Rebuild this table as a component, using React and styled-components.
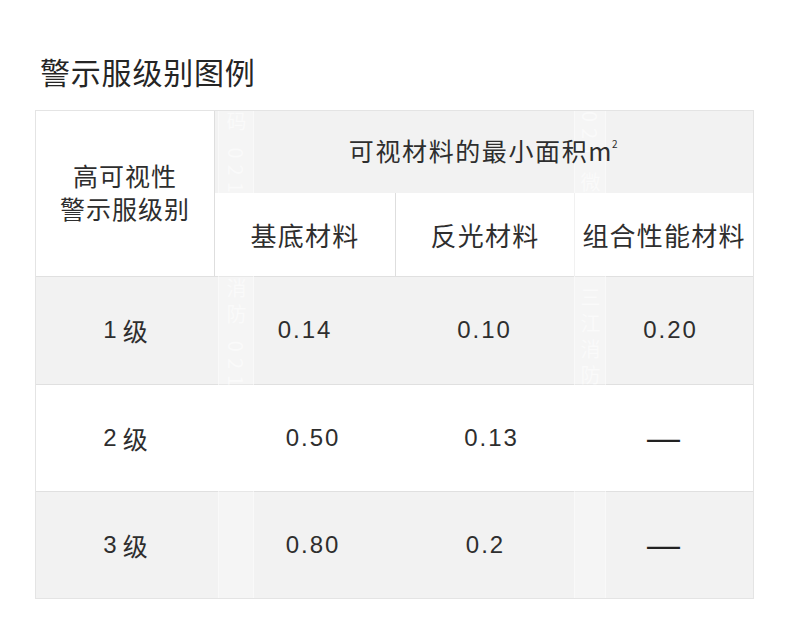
import React from 'react';
import styled, { createGlobalStyle } from 'styled-components';

const GlobalStyle = createGlobalStyle`
  body {
    margin: 0;
    background: #fff;
    font-family: "Noto Sans CJK SC", "Noto Sans", sans-serif;
    color: #2b2b2b;
  }
`;

const Page = styled.div`
  width: 790px;
  height: 643px;
  padding: 55px 36px 0;
  box-sizing: border-box;
`;

const Title = styled.h1`
  margin: 0 0 22px 4px;
  font-size: 30px;
  line-height: 33px;
  font-weight: 400;
  letter-spacing: 0.8px;
  color: #252525;
`;

const Table = styled.div`
  position: relative;
  display: grid;
  grid-template-columns: 179px 180px 179px 179px;
  grid-template-rows: 82px 83px 108px 107px 107px;
  width: 717px;
  border: 1px solid #e4e4e4;
  box-sizing: content-box;
  margin-left: -1px;
`;

const Cell = styled.div`
  display: flex;
  align-items: center;
  justify-content: center;
  box-sizing: border-box;
  background: ${({ $shade }) => ($shade ? '#f2f2f2' : '#fff')};
  font-size: 25px;
  letter-spacing: 1px;
  color: #2e2e2e;
`;

/* text sits above the watermark strips */
const Text = styled.span`
  position: relative;
  z-index: 2;
  display: block;
  text-align: center;
`;

const CornerCell = styled(Cell)`
  grid-row: 1 / 3;
  grid-column: 1;
  line-height: 33px;
  border-right: 1px solid #dedede;
  padding-bottom: 3px;
`;

const GroupHead = styled(Cell)`
  grid-column: 2 / 5;
  padding-bottom: 4px;
  letter-spacing: 1.6px;
`;

const Sup = styled.sup`
  font-size: 10px;
  margin-left: -1px;
  position: relative;
  top: -4px;
`;

const SubHead = styled(Cell)`
  border-left: ${({ $first }) => ($first ? 'none' : '1px solid #dedede')};
  font-size: 26px;
  letter-spacing: 1.2px;
`;

const DataCell = styled(Cell)`
  border-top: 1px solid #e0e0e0;
  font-family: "Liberation Sans", "Noto Sans CJK SC", sans-serif;
  font-size: 24px;
  font-weight: 400;
  letter-spacing: 2px;
  padding-left: ${({ $shift }) => $shift || 0}px;
  padding-bottom: 1px;
`;

const LevelLabel = styled(Text)`
  display: inline-flex;
  align-items: center;
  gap: 6px;
  letter-spacing: 0;

  span:last-child {
    font-family: "Noto Sans CJK SC", sans-serif;
    font-size: 25px;
  }
`;

const Dash = styled(Text)`
  font-family: "Liberation Sans", sans-serif;
  font-size: 33px;
  letter-spacing: 0;
  color: #222;
`;

const Watermark = styled.div`
  position: absolute;
  z-index: 1;
  top: 0;
  bottom: 0;
  left: ${({ $left }) => $left}px;
  width: ${({ $width }) => $width}px;
  pointer-events: none;
  background: rgba(255, 255, 255, 0.22);
  border-left: 1px solid rgba(255, 255, 255, 0.45);
  border-right: 1px solid rgba(255, 255, 255, 0.45);
  writing-mode: vertical-rl;
  font-size: 20px;
  line-height: ${({ $width }) => $width}px;
  letter-spacing: 6px;
  color: rgba(255, 255, 255, 0.5);
  white-space: nowrap;
  overflow: hidden;
  font-family: "Noto Sans CJK SC", sans-serif;
`;

const rows = [
  { level: '1', values: ['0.14', '0.10', '0.20'], shifts: [0, 0, 14], shade: true },
  { level: '2', values: ['0.50', '0.13', null], shifts: [16, 14, 0], shade: false },
  { level: '3', values: ['0.80', '0.2', null], shifts: [16, 2, 0], shade: true },
];

const App = () => (
  <Page>
    <GlobalStyle />
    <Title>警示服级别图例</Title>
    <Table>
      <CornerCell>
        <Text>
          高可视性
          <br />
          警示服级别
        </Text>
      </CornerCell>
      <GroupHead $shade>
        <Text>
          可视材料的最小面积m<Sup>2</Sup>
        </Text>
      </GroupHead>
      <SubHead $first>
        <Text>基底材料</Text>
      </SubHead>
      <SubHead>
        <Text>反光材料</Text>
      </SubHead>
      <SubHead>
        <Text>组合性能材料</Text>
      </SubHead>
      {rows.map((row) => (
        <React.Fragment key={row.level}>
          <DataCell $shade={row.shade}>
            <LevelLabel>
              <span>{row.level}</span>
              <span>级</span>
            </LevelLabel>
          </DataCell>
          {row.values.map((v, i) => (
            <DataCell key={i} $shade={row.shade} $shift={row.shifts[i]}>
              {v ? <Text>{v}</Text> : <Dash>—</Dash>}
            </DataCell>
          ))}
        </React.Fragment>
      ))}
      <Watermark $left={182} $width={34}>
        码 0219 三江消防 021 扫描
      </Watermark>
      <Watermark $left={538} $width={30}>
        021 微信扫描 三江消防 02
      </Watermark>
    </Table>
  </Page>
);

export default App;
